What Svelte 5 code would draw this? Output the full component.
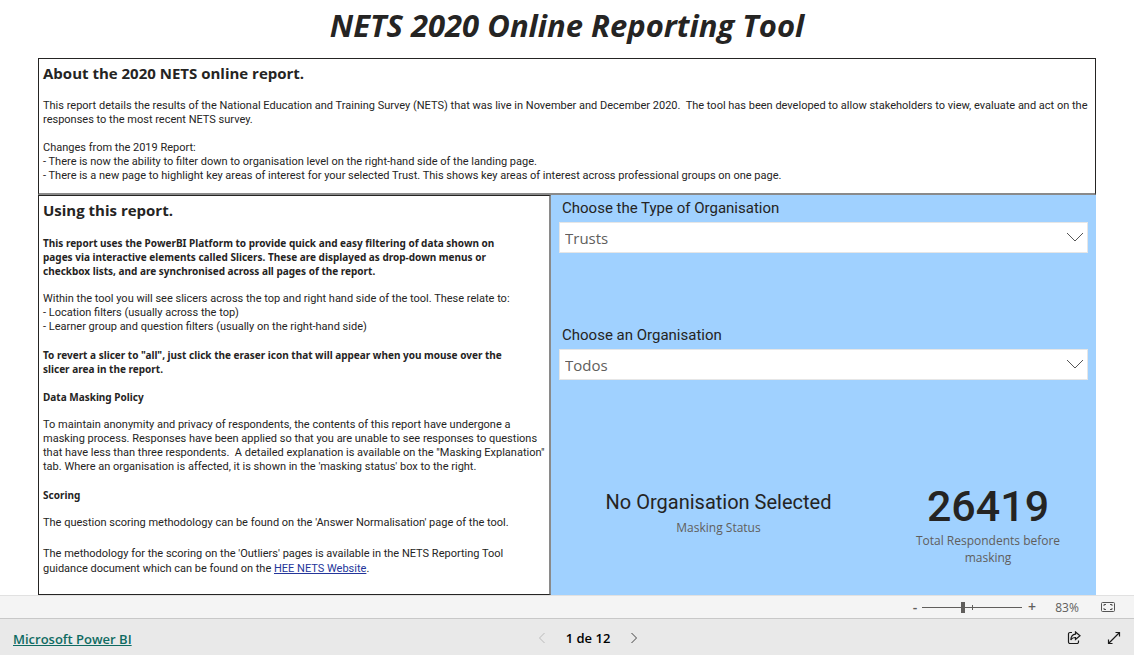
<script>
  let orgType = 'Trusts';
  let organisation = 'Todos';
  let zoom = 83;
  let page = 1;
  const pages = 12;

  const prev = () => {
    if (page > 1) page -= 1;
  };

  const next = () => {
    if (page < pages) page += 1;
  };
</script>

<main>
  <h1>NETS 2020 Online Reporting Tool</h1>

  <div class="report">
    <section class="about">
      <h2>About the 2020 NETS online report.</h2>
      <p>
        This report details the results of the National Education and Training Survey (NETS) that was live in November and December 2020.&nbsp; The tool has been developed to allow stakeholders to view, evaluate and act on the<br />
        responses to the most recent NETS survey.
      </p>
      <p>
        Changes from the 2019 Report:<br />
        - There is now the ability to filter down to organisation level on the right-hand side of the landing page.<br />
        - There is a new page to highlight key areas of interest for your selected Trust. This shows key areas of interest across professional groups on one page.
      </p>
    </section>

    <div class="columns">
      <section class="using">
        <h2>Using this report.</h2>
        <p class="strong">
          This report uses the PowerBI Platform to provide quick and easy filtering of data shown on<br />
          pages via interactive elements called Slicers. These are displayed as drop-down menus or<br />
          checkbox lists, and are synchronised across all pages of the report.
        </p>
        <p>
          Within the tool you will see slicers across the top and right hand side of the tool. These relate to:<br />
          - Location filters (usually across the top)<br />
          - Learner group and question filters (usually on the right-hand side)
        </p>
        <p class="strong">
          To revert a slicer to "all", just click the eraser icon that will appear when you mouse over the<br />
          slicer area in the report.
        </p>
        <p class="strong">Data Masking Policy</p>
        <p>
          To maintain anonymity and privacy of respondents, the contents of this report have undergone a<br />
          masking process. Responses have been applied so that you are unable to see responses to questions<br />
          that have less than three respondents.&nbsp; A detailed explanation is available on the "Masking Explanation"<br />
          tab. Where an organisation is affected, it is shown in the 'masking status' box to the right.
        </p>
        <p class="strong">Scoring</p>
        <p>The question scoring methodology can be found on the 'Answer Normalisation' page of the tool.</p>
        <p class="last">
          The methodology for the scoring on the 'Outliers' pages is available in the NETS Reporting Tool<br />
          guidance document which can be found on the <a href="#nets">HEE NETS Website</a>.
        </p>
      </section>

      <section class="filters">
        <div class="slicer">
          <label for="org-type">Choose the Type of Organisation</label>
          <div class="dropdown">
            <select id="org-type" bind:value={orgType}>
              <option>Trusts</option>
            </select>
            <svg width="18" height="10" viewBox="0 0 18 10"><path d="M1 1l8 8 8-8" /></svg>
          </div>
        </div>
        <div class="slicer">
          <label for="org">Choose an Organisation</label>
          <div class="dropdown">
            <select id="org" bind:value={organisation}>
              <option>Todos</option>
            </select>
            <svg width="18" height="10" viewBox="0 0 18 10"><path d="M1 1l8 8 8-8" /></svg>
          </div>
        </div>

        <div class="cards">
          <div class="card">
            <div class="status">No Organisation Selected</div>
            <div class="caption">Masking Status</div>
          </div>
          <div class="card total">
            <div class="number">26419</div>
            <div class="caption">Total Respondents before masking</div>
          </div>
        </div>
      </section>
    </div>
  </div>

  <div class="zoombar">
    <button class="step" aria-label="Zoom out" on:click={() => (zoom -= 1)}>-</button>
    <input type="range" min="10" max="190" bind:value={zoom} aria-label="Zoom" />
    <button class="step" aria-label="Zoom in" on:click={() => (zoom += 1)}>+</button>
    <span class="percent">{zoom}%</span>
    <button class="fit" aria-label="Fit to page">
      <svg width="16" height="12" viewBox="0 0 16 12" fill="none" stroke="#555">
        <rect x="1.5" y="1.5" width="13" height="9" rx="1" />
        <path d="M6 3.5H4v1.5M10 3.5h2v1.5M6 8.5H4V7M10 8.5h2V7" />
      </svg>
    </button>
  </div>

  <footer>
    <a href="#powerbi">Microsoft Power BI</a>
    <nav>
      <button aria-label="Previous page" disabled={page === 1} on:click={prev}>
        <svg width="8" height="12" viewBox="0 0 8 12"><path d="M6.500 1L1.500 6l5 5" /></svg>
      </button>
      <span>{page} de {pages}</span>
      <button aria-label="Next page" on:click={next}>
        <svg width="8" height="12" viewBox="0 0 8 12"><path d="M1.500 1l5 5-5 5" /></svg>
      </button>
    </nav>
    <div class="actions">
      <button aria-label="Share">
        <svg width="14" height="14" viewBox="0 0 14 14" fill="none" stroke="#1b1b1b" stroke-width="1.200">
          <path d="M5 1.500H3A1.500 1.500 0 0 0 1.500 3v8A1.500 1.500 0 0 0 3 12.500h7a1.500 1.500 0 0 0 1.500-1.500V9.500" />
          <path d="M8.500 1L13 4.800 8.500 8.500V6.500C6 6.300 4.800 7.300 3.800 9 4 5.500 6 3.300 8.500 3.200z" />
        </svg>
      </button>
      <button aria-label="Full screen">
        <svg width="14" height="14" viewBox="0 0 14 14" fill="none" stroke="#1b1b1b" stroke-width="1.200">
          <path d="M1.500 12.500l11-11M8.500 1.500h4v4M1.500 8.500v4h4" />
        </svg>
      </button>
    </div>
  </footer>
</main>

<style>
  :global(body) {
    background: #fff;
  }

  main {
    font-family: 'Open Sans', 'Noto Sans', sans-serif;
    color: #252423;
  }

  h1 {
    margin: 0;
    height: 58px;
    line-height: 50px;
    font-size: 31px;
    font-style: italic;
    font-weight: bold;
    text-align: center;
  }

  .report {
    margin: 0 38px;
  }

  h2 {
    margin: 0 0 12px;
    font-size: 15px;
    line-height: 28px;
    font-weight: bold;
  }

  p {
    margin: 0 0 14px;
    font-family: Roboto, sans-serif;
    font-size: 11px;
    line-height: 14px;
    white-space: nowrap;
  }

  .strong {
    font-family: 'Noto Sans', sans-serif;
    font-size: 10px;
    font-weight: bold;
  }

  .last {
    line-height: 15px;
  }

  .about {
    padding: 0 4px 10px;
    border: 1px solid #252423;
    border-bottom: 2px solid #8a8a8a;
  }

  p a {
    color: #24359a;
  }

  .about p:last-child {
    margin-bottom: 0;
  }

  .columns {
    display: grid;
    grid-template-columns: 513fr 545fr;
    min-height: 400px;
  }

  .using {
    min-width: 0;
    padding: 0 4px;
    border: 1px solid #252423;
    border-right: 2px solid #8a8a8a;
  }

  .using p:last-child {
    margin: 16px 0 0;
  }

  .filters {
    background: #a0d1ff;
  }

  .slicer {
    padding: 0 8px 69px;
  }

  .slicer label {
    display: block;
    padding-left: 3px;
    font-family: Roboto, sans-serif;
    font-size: 15px;
    line-height: 27px;
  }

  .dropdown {
    display: grid;
    align-items: center;
  }

  .dropdown select,
  .dropdown svg {
    grid-area: 1 / 1;
  }

  .dropdown select {
    appearance: none;
    height: 31px;
    padding: 0 5px;
    border: 1px solid #e6e6e6;
    border-radius: 0;
    background: #fff;
    color: #605e5c;
    font-family: 'Open Sans', sans-serif;
    font-size: 15px;
  }

  .dropdown svg {
    justify-self: end;
    margin: 0 4px 2px 0;
    fill: none;
    stroke: #555;
    pointer-events: none;
  }

  .cards {
    display: grid;
    grid-template-columns: 335fr 210fr;
    padding-top: 36px;
    text-align: center;
  }

  .total {
    padding: 0 22px 0 16px;
  }

  .status {
    font-family: Roboto, sans-serif;
    font-size: 20px;
    line-height: 34px;
  }

  .number {
    margin-bottom: 4px;
    font-family: Roboto, sans-serif;
    font-size: 43px;
    font-weight: 500;
    line-height: 43px;
  }

  .caption {
    color: #605e5c;
    font-size: 12px;
    line-height: 17px;
  }

  button {
    padding: 0;
    border: none;
    background: none;
    color: inherit;
    font-family: inherit;
    cursor: pointer;
  }

  svg {
    display: block;
  }

  .zoombar {
    display: flex;
    align-items: center;
    justify-content: flex-end;
    height: 22px;
    padding-right: 18px;
    border-top: 1px solid #e1e1e1;
    background: #f4f4f4;
    color: #605e5c;
    font-size: 12px;
  }

  .step {
    width: 20px;
    font-size: 14px;
    font-weight: 600;
    line-height: 20px;
  }

  .step:first-child {
    width: 14px;
  }

  .zoombar input {
    appearance: none;
    width: 100px;
    height: 20px;
    margin: 0;
    background:
      linear-gradient(#605e5c, #605e5c) center / 100% 1px no-repeat,
      linear-gradient(#605e5c, #605e5c) center / 1px 5px no-repeat;
  }

  .zoombar input::-webkit-slider-thumb {
    appearance: none;
    width: 4px;
    height: 11px;
    background: #605e5c;
  }

  .percent {
    width: 50px;
    text-align: center;
  }

  .fit {
    margin-left: 8px;
  }

  footer {
    display: grid;
    grid-template-columns: 1fr auto 1fr;
    align-items: center;
    height: 36px;
    padding: 0 13px;
    border-top: 1px solid #c8c8c8;
    background: #e9e9e9;
    font-size: 13px;
  }

  footer a {
    justify-self: start;
    margin-top: 4px;
    color: #0f6b62;
    font-weight: 600;
  }

  nav {
    display: flex;
    align-items: center;
    gap: 20px;
    margin-right: -42px;
    padding-top: 2px;
    color: #000;
    font-weight: 600;
  }

  nav svg {
    fill: none;
    stroke: #444;
  }

  nav button:disabled svg {
    stroke: #bbb;
  }

  .actions {
    display: flex;
    justify-content: flex-end;
    gap: 26px;
    padding-top: 2px;
  }
</style>
